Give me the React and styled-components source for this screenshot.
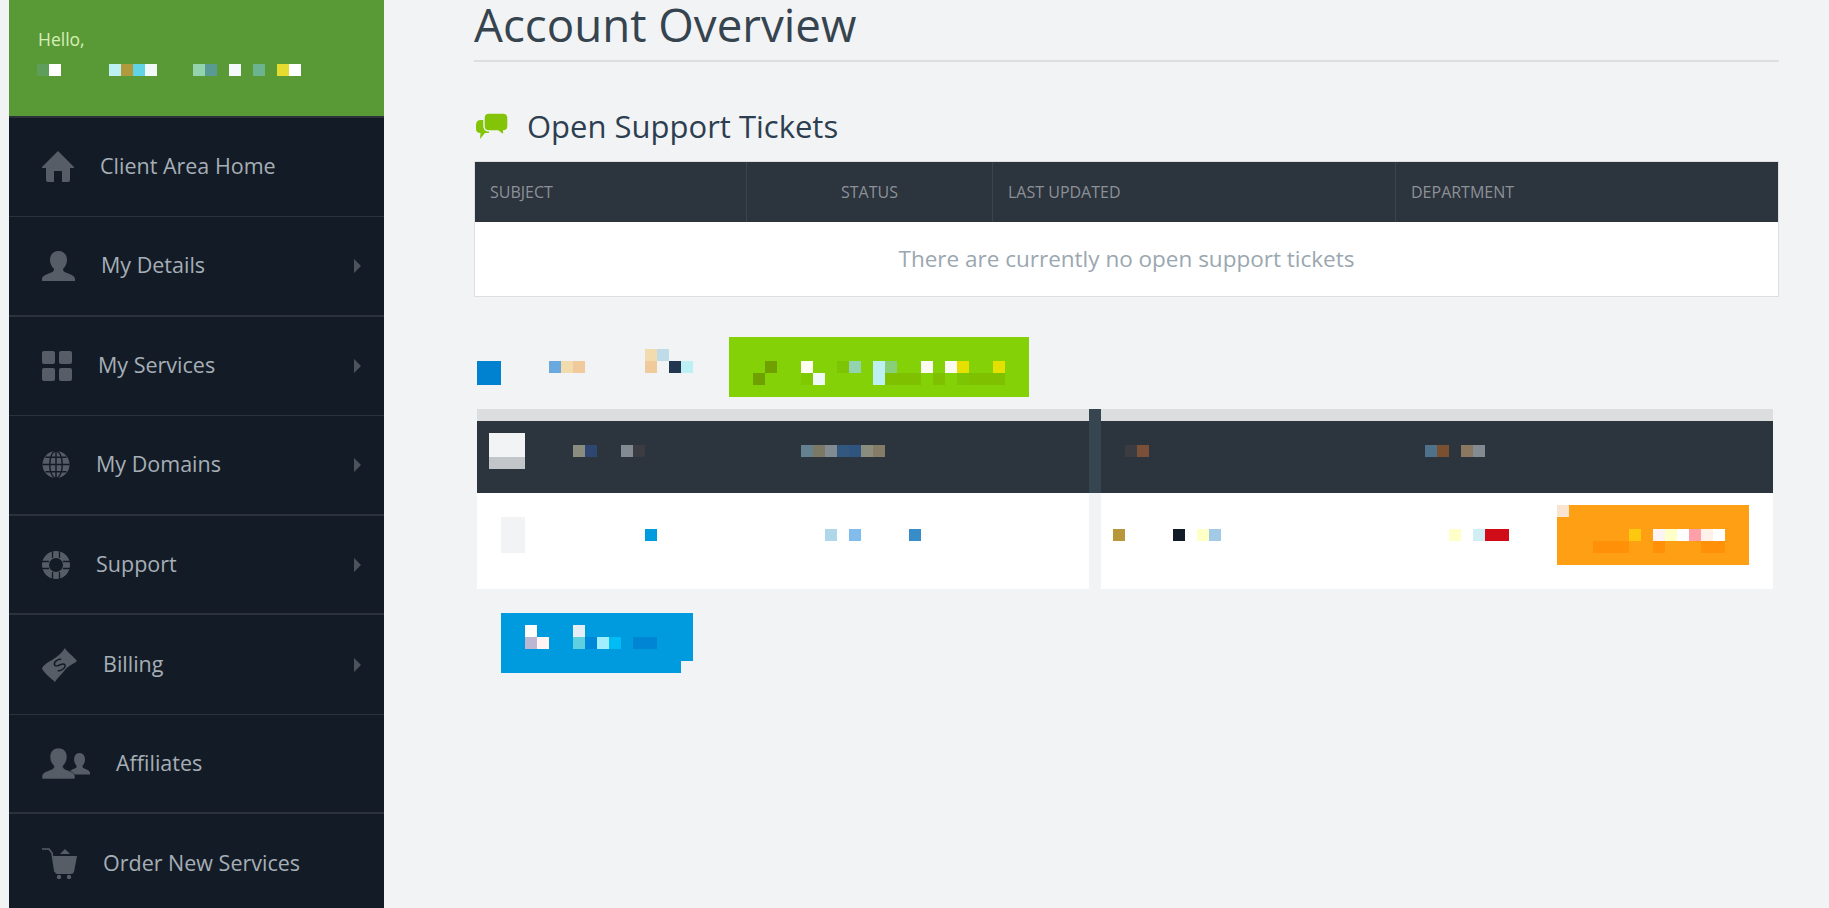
import React from "react";
import styled, { createGlobalStyle } from "styled-components";

const FONT = `"Open Sans", "Noto Sans", "Liberation Sans", sans-serif`;
const ICON = "#565d67";
const NAV_BG = "#131c26";
const HEAD_BG = "#2c343d";

const GlobalStyle = createGlobalStyle`
  html, body {
    margin: 0;
    height: 100%;
    overflow: hidden;
    background: #f2f3f5;
    font-family: ${FONT};
  }
`;

const Page = styled.div`
  display: flex;
  height: 908px;
  padding-left: 9px;
  overflow: hidden;
`;

const Sidebar = styled.aside`
  flex: 0 0 375px;
  background: ${NAV_BG};
  display: flex;
  flex-direction: column;
`;

const Hello = styled.div`
  flex: none;
  height: 87.5px;
  border-bottom: 2px solid #2b323c;
  background: #5a9a36;
  padding: 28px 0 0 28px;
`;

const HelloText = styled.div`
  font-size: 17.5px;
  line-height: 22px;
  margin-left: 1px;
  color: #d6efb8;
`;

const NavItem = styled.a`
  flex: 0 0 99.57px;
  box-sizing: border-box;
  display: flex;
  align-items: center;
  gap: 26px;
  padding: 0 23px 0 33px;
  border-bottom: ${(p) => (p.$thick ? 2 : 1)}px solid ${(p) => (p.$last ? "transparent" : "#2b323c")};
  color: #a6aeb6;
  font-size: 21.5px;
  svg {
    flex: none;
    fill: ${ICON};
  }
`;

const NavLabel = styled.span`
  flex: 1;
  padding-bottom: 2px;
`;

const Arrow = styled.i`
  width: 0;
  height: 0;
  border-style: solid;
  border-width: 7px 0 7px 7px;
  border-color: transparent transparent transparent #4c535b;
`;

const Main = styled.main`
  flex: 1;
  min-width: 0;
  padding: 0 50px 0 90px;
`;

const Title = styled.h1`
  margin: 0;
  height: 60px;
  border-bottom: 2px solid #dcdee0;
  font-size: 45.7px;
  line-height: 48px;
  font-weight: 400;
  color: #36444f;
`;

const SectionTitle = styled.h2`
  display: flex;
  align-items: center;
  gap: 19px;
  margin: 37px 0 8px 2px;
  height: 54px;
  font-size: 31px;
  line-height: 40px;
  font-weight: 400;
  color: #2d3e50;
`;

const TicketTable = styled.div`
  border: 1px solid #dcdee0;
  background: #fff;
`;

const TicketHead = styled.div`
  display: grid;
  grid-template-columns: 271px 246px 403px 1fr;
  height: 60px;
  background: ${HEAD_BG};
`;

const HeadCell = styled.div`
  display: flex;
  align-items: center;
  justify-content: ${(p) => (p.$center ? "center" : "flex-start")};
  padding-left: ${(p) => (p.$center ? 0 : 15)}px;
  border-left: ${(p) => (p.$first ? "0" : "1px solid #3b434e")};
  font-size: 16px;
  color: #8c9198;
`;

const EmptyRow = styled.div`
  height: 72px;
  padding-bottom: 2px;
  display: flex;
  align-items: center;
  justify-content: center;
  font-size: 22.5px;
  color: #9aa7b0;
`;

const Mosaic = styled.div`
  display: grid;
  grid-auto-columns: 12px;
  grid-auto-rows: 12px;
  width: max-content;
`;

const Pixel = styled.span`
  grid-column: ${(p) => p.$c + 1} / span ${(p) => p.$w};
  grid-row: ${(p) => p.$r + 1} / span ${(p) => p.$h};
  background: ${(p) => p.$bg};
`;

// cells: [col, row, colour, width, height] on a 12px grid
const Pixels = ({ cells, className }) => (
  <Mosaic className={className}>
    {cells.map(([c, r, bg, w = 1, h = 1], i) => (
      <Pixel key={i} $c={c} $r={r} $bg={bg} $w={w} $h={h} />
    ))}
  </Mosaic>
);

const HelloPixels = styled(Pixels)`
  margin-top: 14px;
`;

const ActionRow = styled.div`
  display: flex;
  align-items: flex-start;
  margin: 40px 0 0 3px;
`;

const RowPixels = styled(Pixels)`
  margin-top: 12px;
`;

const GreenButton = styled.div`
  width: 300px;
  height: 60px;
  margin-left: 36px;
  box-sizing: border-box;
  padding: 24px 0 0 24px;
  background: #84d108;
`;

const Columns = styled.div`
  display: grid;
  grid-template-columns: 612px 12px 672px;
  margin: 12px 0 0 3px;
`;

const StripHead = styled.div`
  height: 12px;
  background: #dcdddf;
`;

const DarkHead = styled.div`
  height: 72px;
  box-sizing: border-box;
  background: ${HEAD_BG};
  padding: 12px 0 0 12px;
`;

const WhiteBody = styled.div`
  display: flex;
  align-items: flex-start;
  justify-content: space-between;
  height: 96px;
  box-sizing: border-box;
  background: #fff;
  padding: 12px 24px 0 12px;
`;

const Divider = styled.div`
  height: 84px;
  background: #36454f;
`;

const OrangeButton = styled.div`
  width: 192px;
  height: 60px;
  background: #ff9f14;
`;

const BlueButton = styled.div`
  width: 192px;
  height: 48px;
  box-sizing: border-box;
  margin: 24px 0 0 27px;
  padding-top: 12px;
  background: #009bdf;
`;

const BlueTail = styled.div`
  width: 180px;
  height: 12px;
  margin-left: 27px;
  background: #009bdf;
`;

const IconHome = () => (
  <svg width="32" height="31" viewBox="0 0 32 31">
    <path d="M16 0 L32 16 L32 17 L28 17 L28 29 Q28 31 26 31 L20 31 L20 20 L12 20 L12 31 L6 31 Q4 31 4 29 L4 17 L0 17 L0 16 Z" />
  </svg>
);
const IconUser = ({ w = 33, h = 30 }) => (
  <svg width={w} height={h} viewBox="0 0 33 30">
    <path d="M16.5 0 C22 0 25 4 25 9 C25 13 23 16 21 18 C21 20 22 21 25 22 C29 23.5 33 25 33 28 L33 30 L0 30 L0 28 C0 25 4 23.5 8 22 C11 21 12 20 12 18 C10 16 8 13 8 9 C8 4 11 0 16.5 0 Z" />
  </svg>
);
const IconGrid = () => (
  <svg width="30" height="30" viewBox="0 0 30 30">
    <rect x="0" y="0" width="13" height="13" rx="2" />
    <rect x="17" y="0" width="13" height="13" rx="2" />
    <rect x="0" y="17" width="13" height="13" rx="2" />
    <rect x="17" y="17" width="13" height="13" rx="2" />
  </svg>
);
const IconGlobe = () => (
  <svg width="28" height="27" viewBox="0 0 28 28">
    <circle cx="14" cy="14" r="14" />
    <g fill="none" stroke={NAV_BG} strokeWidth="1.5">
      <ellipse cx="14" cy="14" rx="6.5" ry="14" />
      <path d="M14 0 V28 M0 14 H28 M3 6.5 H25 M3 21.5 H25" />
    </g>
  </svg>
);
const IconSupport = () => (
  <svg width="28" height="28" viewBox="0 0 28 28">
    <circle cx="14" cy="14" r="10.5" fill="none" stroke={ICON} strokeWidth="7" />
    <path d="M10.5 0 V7 M17.5 0 V7 M10.5 21 V28 M17.5 21 V28 M0 10.5 H7 M0 17.5 H7 M21 10.5 H28 M21 17.5 H28" stroke={NAV_BG} strokeWidth="1.3" />
  </svg>
);
const IconMoney = () => (
  <svg width="35" height="34" viewBox="0 0 35 34">
    <path d="M23 0 C24 3 28 5 35 13 C32 16 27 17 23 22 C19 27 15 30 13 34 C9 30 4 27 0 21 C1 17 5 15 10 12 C15 9 20 5 23 0 Z" />
    <g transform="rotate(-35 17.5 17)">
      <path d="M22 13.5 C20.5 11 13.5 11 13.5 14.5 C13.5 18 22 16 22 19.8 C22 23 14.5 23 13 20.5" fill="none" stroke={NAV_BG} strokeWidth="1.5" />
    </g>
  </svg>
);
const IconUsers = () => (
  <svg width="48" height="31" viewBox="0 0 48 31">
    <g transform="translate(27 5) scale(0.64 0.72)">
      <path d="M16.5 0 C22 0 25 4 25 9 C25 13 23 16 21 18 C21 20 22 21 25 22 C29 23.5 33 25 33 28 L33 30 L0 30 L0 28 C0 25 4 23.5 8 22 C11 21 12 20 12 18 C10 16 8 13 8 9 C8 4 11 0 16.5 0 Z" />
    </g>
    <path d="M16.5 0 C22 0 25 4 25 9 C25 13 23 16 21 18 C21 20 22 21 25 22 C29 23.5 33 25 33 28 L33 31 L0 31 L0 28 C0 25 4 23.5 8 22 C11 21 12 20 12 18 C10 16 8 13 8 9 C8 4 11 0 16.5 0 Z" stroke={NAV_BG} strokeWidth="0.6" />
  </svg>
);
const IconCart = () => (
  <svg width="35" height="31" viewBox="0 0 35 31">
    <path d="M0 1 H7 L10 5 L13 24" fill="none" stroke={ICON} strokeWidth="1.6" />
    <path d="M11 8 H35 L32 24 Q31 26 29 26 H15 Q13 26 13 24 Z" />
    <path d="M18 6 L23 1 L28 6 Z" />
    <circle cx="17" cy="29" r="2.2" />
    <circle cx="27" cy="29" r="2.2" />
  </svg>
);
const IconTickets = () => (
  <svg width="32" height="26" viewBox="0 0 32 26">
    <path d="M5 7 H13 V20 H9 L4 26 L4.5 20 Q0 20 0 16 V12 Q0 7 5 7 Z" fill="#84c408" />
    <path d="M13 0 H27 Q32 0 32 5 V13 Q32 18 27 18 H28 L27.5 22 L22 18 H13 Q8 18 8 13 V5 Q8 0 13 0 Z" fill="#84c408" stroke="#f2f3f5" strokeWidth="1.4" />
  </svg>
);

const NAV = [
  { label: "Client Area Home", Icon: IconHome },
  { label: "My Details", Icon: IconUser, arrow: true, thick: true },
  { label: "My Services", Icon: IconGrid, arrow: true },
  { label: "My Domains", Icon: IconGlobe, arrow: true, thick: true },
  { label: "Support", Icon: IconSupport, arrow: true, thick: true },
  { label: "Billing", Icon: IconMoney, arrow: true },
  { label: "Affiliates", Icon: IconUsers, thick: true },
  { label: "Order New Services", Icon: IconCart, last: true },
];

const HELLO_CELLS = [
  [0, 0, "#5f9d5a"], [1, 0, "#fff"],
  [6, 0, "#bdf0f2"], [7, 0, "#b09a3c"], [8, 0, "#60d4e4"], [9, 0, "#f0f8fa"],
  [13, 0, "#94d4ac"], [14, 0, "#5a9a94"], [16, 0, "#f4fafc"], [18, 0, "#6cb490"],
  [20, 0, "#e6dc30"], [21, 0, "#fff"],
];

const ROW_CELLS = [
  [0, 1, "#0082d0", 2, 2],
  [6, 1, "#6aa9de"], [7, 1, "#f2dcae"], [8, 1, "#f0ca9a"],
  [14, 0, "#f2dcae"], [15, 0, "#bfdbe8"], [14, 1, "#f0ca9a"], [16, 1, "#22364f"], [17, 1, "#bdf0f2"],
];

const GREEN_CELLS = [
  [1, 0, "#6fa000"], [4, 0, "#fdfdf0"], [7, 0, "#7cc404"], [8, 0, "#93d4b0"], [10, 0, "#bdf0f2", 1, 2],
  [11, 0, "#88cf78"], [14, 0, "#fafaf0"], [16, 0, "#fbfbf0"], [17, 0, "#e6e000"], [20, 0, "#e6e000"],
  [0, 1, "#6fa000"], [4, 1, "#80c800"], [5, 1, "#f0f8f8"], [11, 1, "#7fc000", 3], [15, 1, "#7fc000"],
  [17, 1, "#7cc404"], [18, 1, "#7fc000", 3],
];

const HEAD_LEFT = [
  [0, 0, "#f2f3f5", 3, 2], [0, 2, "#c3c6c9", 3],
  [7, 1, "#8a8c7e"], [8, 1, "#2d4672"], [11, 1, "#828a92"], [12, 1, "#3a3c42"],
  [26, 1, "#65808f"], [27, 1, "#7c7866"], [28, 1, "#828a92"], [29, 1, "#33587f"], [30, 1, "#2f5480"],
  [31, 1, "#8a8c7e"], [32, 1, "#857c68"],
];

const HEAD_RIGHT = [
  [1, 1, "#3a3c42"], [2, 1, "#7a5038"],
  [26, 1, "#4f7189"], [27, 1, "#7a5030"], [29, 1, "#8a7860"], [30, 1, "#828a92"],
];

const BODY_LEFT = [
  [1, 1, "#f2f3f5", 2, 3],
  [13, 2, "#009bdf"], [28, 2, "#aed8ea"], [30, 2, "#82bcec"], [35, 2, "#388dc8"],
];

const BODY_RIGHT = [
  [0, 2, "#b8963a"], [5, 2, "#121c28"], [7, 2, "#ffffc8"], [8, 2, "#a2cae6"],
  [28, 2, "#ffffc8"], [30, 2, "#d0eef4"], [31, 2, "#d00c18", 2],
];

const ORANGE_CELLS = [
  [0, 0, "#f8e4d0"],
  [6, 2, "#ffc810"], [8, 2, "#fff4f4"], [9, 2, "#ffffc8"], [10, 2, "#fff"], [11, 2, "#ffa0a8"], [12, 2, "#fff0ea"], [13, 2, "#fff"],
  [3, 3, "#ff9008", 3], [8, 3, "#ff9008"], [12, 3, "#ff9008", 2],
];

const BLUE_CELLS = [
  [2, 0, "#fff"], [6, 0, "#e4eef4"],
  [2, 1, "#bcb8d4"], [3, 1, "#fff4f2"], [6, 1, "#5fd0e0"], [7, 1, "#0088d8"], [8, 1, "#a0eeff"], [9, 1, "#00bcf4"], [11, 1, "#0084d4", 2],
];

const App = () => (
  <Page>
    <GlobalStyle />
    <Sidebar>
      <Hello>
        <HelloText>Hello,</HelloText>
        <HelloPixels cells={HELLO_CELLS} />
      </Hello>
      {NAV.map(({ label, Icon, arrow, thick, last }) => (
        <NavItem key={label} $thick={thick} $last={last}>
          <Icon />
          <NavLabel>{label}</NavLabel>
          {arrow && <Arrow />}
        </NavItem>
      ))}
    </Sidebar>

    <Main>
      <Title>Account Overview</Title>
      <SectionTitle>
        <IconTickets />
        Open Support Tickets
      </SectionTitle>

      <TicketTable>
        <TicketHead>
          <HeadCell $first>SUBJECT</HeadCell>
          <HeadCell $center>STATUS</HeadCell>
          <HeadCell>LAST UPDATED</HeadCell>
          <HeadCell>DEPARTMENT</HeadCell>
        </TicketHead>
        <EmptyRow>There are currently no open support tickets</EmptyRow>
      </TicketTable>

      <ActionRow>
        <RowPixels cells={ROW_CELLS} />
        <GreenButton>
          <Pixels cells={GREEN_CELLS} />
        </GreenButton>
      </ActionRow>

      <Columns>
        <div>
          <StripHead />
          <DarkHead>
            <Pixels cells={HEAD_LEFT} />
          </DarkHead>
          <WhiteBody>
            <Pixels cells={BODY_LEFT} />
          </WhiteBody>
        </div>
        <Divider />
        <div>
          <StripHead />
          <DarkHead>
            <Pixels cells={HEAD_RIGHT} />
          </DarkHead>
          <WhiteBody>
            <Pixels cells={BODY_RIGHT} />
            <OrangeButton>
              <Pixels cells={ORANGE_CELLS} />
            </OrangeButton>
          </WhiteBody>
        </div>
      </Columns>

      <BlueButton>
        <Pixels cells={BLUE_CELLS} />
      </BlueButton>
      <BlueTail />
    </Main>
  </Page>
);

export default App;
